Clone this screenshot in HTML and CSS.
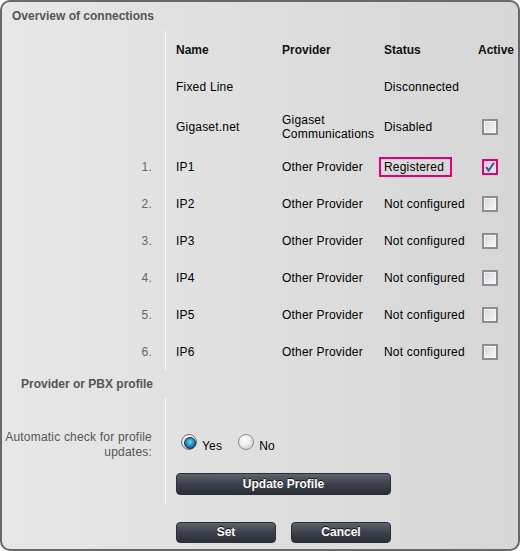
FILE: index.html
```html
<!DOCTYPE html>
<html>
<head>
<meta charset="utf-8">
<title>Overview of connections</title>
<link rel="stylesheet" href="styles.css">
</head>
<body>
<div class="panel">
  <h2 class="title">Overview of connections</h2>
  <div class="conn">
    <div class="crow head">
      <div class="num"></div>
      <div class="c1">Name</div>
      <div class="c2">Provider</div>
      <div class="c3">Status</div>
      <div class="c4">Active</div>
    </div>
    <div class="crow">
      <div class="num"></div>
      <div class="c1">Fixed Line</div>
      <div class="c2"></div>
      <div class="c3">Disconnected</div>
      <div class="c4"></div>
    </div>
    <div class="crow tall">
      <div class="num"></div>
      <div class="c1">Gigaset.net</div>
      <div class="c2">Gigaset Communications</div>
      <div class="c3">Disabled</div>
      <div class="c4"><span class="cb"></span></div>
    </div>
    <div class="crow">
      <div class="num">1.</div>
      <div class="c1">IP1</div>
      <div class="c2">Other Provider</div>
      <div class="c3"><span class="hl">Registered</span></div>
      <div class="c4"><span class="cb checked"><svg width="12" height="12" viewBox="0 0 12 12"><path d="M2.2 6.2 L4.6 9.6 L10 1.8" fill="none" stroke="#4f4d88" stroke-width="2"/></svg></span></div>
    </div>
    <div class="crow">
      <div class="num">2.</div>
      <div class="c1">IP2</div>
      <div class="c2">Other Provider</div>
      <div class="c3">Not configured</div>
      <div class="c4"><span class="cb"></span></div>
    </div>
    <div class="crow">
      <div class="num">3.</div>
      <div class="c1">IP3</div>
      <div class="c2">Other Provider</div>
      <div class="c3">Not configured</div>
      <div class="c4"><span class="cb"></span></div>
    </div>
    <div class="crow">
      <div class="num">4.</div>
      <div class="c1">IP4</div>
      <div class="c2">Other Provider</div>
      <div class="c3">Not configured</div>
      <div class="c4"><span class="cb"></span></div>
    </div>
    <div class="crow">
      <div class="num">5.</div>
      <div class="c1">IP5</div>
      <div class="c2">Other Provider</div>
      <div class="c3">Not configured</div>
      <div class="c4"><span class="cb"></span></div>
    </div>
    <div class="crow">
      <div class="num">6.</div>
      <div class="c1">IP6</div>
      <div class="c2">Other Provider</div>
      <div class="c3">Not configured</div>
      <div class="c4"><span class="cb"></span></div>
    </div>
  </div>

  <div class="sec-head">
    <div class="sec-label">Provider or PBX profile</div>
  </div>

  <div class="sec">
    <div class="label">Automatic check for profile updates:</div>
    <div class="field">
      <div class="radios">
        <span class="radio on"></span><span class="rtext">Yes</span>
        <span class="radio off"></span><span class="rtext">No</span>
      </div>
      <button class="btn wide">Update Profile</button>
    </div>
  </div>

  <div class="actions">
    <button class="btn">Set</button>
    <button class="btn">Cancel</button>
  </div>
</div>
</body>
</html>
```

FILE: styles.css
```css
* { box-sizing: border-box; }
html, body { margin: 0; padding: 0; background: #fff; }
body {
  font-family: "Liberation Sans", Arial, sans-serif;
  font-size: 12px;
  color: #000;
  letter-spacing: 0.2px;
}
.panel {
  width: 520px;
  height: 551px;
  border: 2px solid #686868;
  border-radius: 10px;
  background: linear-gradient(to right, #e7e7e7, #d6d6d6);
  overflow: hidden;
}
.title {
  margin: 0;
  height: 29px;
  padding: 7px 0 0 10px;
  font-size: 12px;
  line-height: 14px;
  font-weight: bold;
  color: #555;
  letter-spacing: 0;
}
.crow {
  display: grid;
  grid-template-columns: 164px 116px 102px 94px 40px;
  height: 37px;
  line-height: 14px;
}
.crow.tall { height: 43px; }
.crow > div { display: flex; align-items: center; }
.crow .num {
  border-right: 1px solid #fff;
  justify-content: flex-end;
  padding-right: 13px;
  color: #666;
}
.crow .c1 { padding-left: 10px; }
.head { font-weight: bold; color: #111; letter-spacing: 0; }
.hl {
  display: inline-block;
  margin-left: -5px;
  padding: 1px 6px 1px 3px;
  border: 2px solid #e2007a;
}
.cb {
  display: inline-block;
  margin-left: 4px;
  width: 16px;
  height: 16px;
  border: 2px solid #8d8d8d;
  box-shadow: inset 0 0 0 1px #f6f6f6;
  background: linear-gradient(135deg, #d3d7df, #f9f9f9);
}
.cb.checked {
  border-color: #e2007a;
  box-shadow: none;
  background: linear-gradient(135deg, #cfd1df, #e8e9ef);
  padding: 0;
}
.cb svg { display: block; }
.sec-head {
  display: flex;
  height: 28px;
  align-items: center;
}
.sec-label {
  width: 164px;
  padding-right: 13px;
  text-align: right;
  font-weight: bold;
  color: #555;
  line-height: 14px;
  letter-spacing: 0;
}
.sec {
  display: flex;
  height: 106px;
}
.sec .label {
  width: 164px;
  flex: none;
  border-right: 1px solid #fff;
  padding: 32px 13px 0 0;
  text-align: right;
  line-height: 15px;
  color: #555;
}
.sec .field {
  flex: 1;
  padding: 32px 0 0 10px;
}
.radios {
  display: flex;
  align-items: flex-start;
  height: 30px;
}
.radio {
  position: relative;
  width: 16px;
  height: 16px;
  margin-top: 4px;
  border-radius: 50%;
  border: 1px solid #8b8b8b;
  background: radial-gradient(circle at 40% 35%, #ffffff, #ececec 45%, #bcbcbc);
}
.radio.on { margin-left: 5px; border-color: #6f6f6f; }
.radio.off { margin-left: 16px; }
.radio.on::after {
  content: "";
  position: absolute;
  left: 2px;
  top: 2px;
  width: 10px;
  height: 10px;
  border-radius: 50%;
  border: 1px solid #13314d;
  background: radial-gradient(circle at 50% 40%, #6fd3ff, #1a7fc2 55%, #0b3f6b);
}
.rtext {
  margin-left: 5px;
  margin-top: 9px;
  line-height: 14px;
  color: #000;
}
.btn {
  display: block;
  height: 22px;
  width: 100px;
  padding: 0;
  border: 1px solid #2a2d33;
  border-radius: 4px;
  background: linear-gradient(#5d636f, #3c414b 50%, #2b2f37);
  color: #fff;
  font-family: "Liberation Sans", Arial, sans-serif;
  font-size: 12px;
  font-weight: bold;
  line-height: 20px;
  letter-spacing: 0;
  text-shadow: 0 -1px 0 #111;
}
.btn.wide {
  width: 215px;
  margin-top: 13px;
}
.actions {
  display: flex;
  gap: 15px;
  margin-top: 18px;
  padding-left: 174px;
}
.actions .btn { height: 21px; line-height: 19px; }
```
